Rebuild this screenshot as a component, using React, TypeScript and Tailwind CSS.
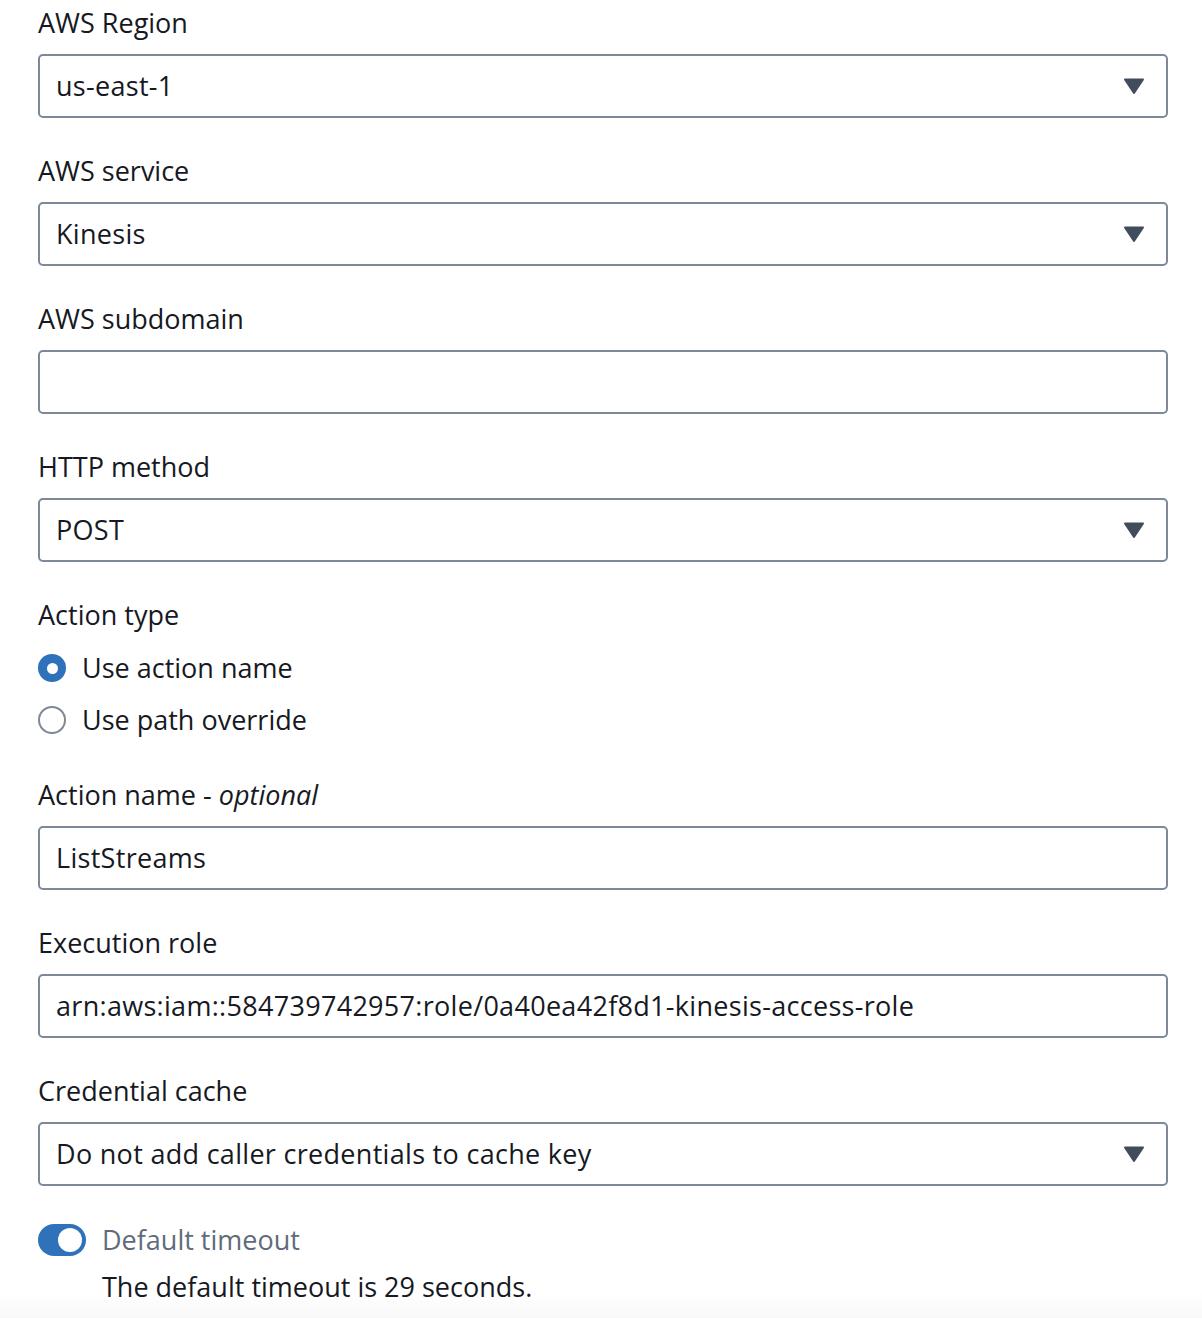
const font = { fontFamily: '"Open Sans", "Noto Sans", Arial, sans-serif' };

function Caret() {
  return (
    <svg width="20" height="16" viewBox="0 0 20 16" className="shrink-0">
      <path d="M1 1.5 L19 1.5 L10 15 Z" fill="#414d5c" stroke="#414d5c" strokeWidth="2" strokeLinejoin="round" />
    </svg>
  );
}

function Label({ children }: { children: React.ReactNode }) {
  return <div className="mb-2 h-10 leading-[34px] text-[27px] text-[#16191f]">{children}</div>;
}

function Box({ value, select }: { value?: string; select?: boolean }) {
  return (
    <div className="flex h-16 items-center justify-between rounded-[5px] border-2 border-[#7d8998] bg-white pl-4 pr-[22px] text-[27px] tracking-[0.3px] text-[#16191f]">
      <span className="truncate">{value}</span>
      {select && <Caret />}
    </div>
  );
}

function Field({ label, value, select }: { label: React.ReactNode; value?: string; select?: boolean }) {
  return (
    <div className="mb-9">
      <Label>{label}</Label>
      <Box value={value} select={select} />
    </div>
  );
}

function Radio({ checked, label }: { checked?: boolean; label: string }) {
  return (
    <div className="flex h-10 items-center gap-4 text-[27px] text-[#16191f]">
      {checked ? (
        <span className="flex h-7 w-7 items-center justify-center rounded-full bg-[#2f72ba]">
          <span className="h-[11px] w-[11px] rounded-full bg-white" />
        </span>
      ) : (
        <span className="h-7 w-7 rounded-full border-2 border-[#7d8998] bg-white" />
      )}
      <span>{label}</span>
    </div>
  );
}

export default function App() {
  return (
    <div className="min-h-[1318px] bg-gradient-to-b from-white from-[98%] to-[#f8f8f8] pl-[38px] pr-[34px] pt-[6px]" style={font}>
      <Field label="AWS Region" value="us-east-1" select />
      <Field label="AWS service" value="Kinesis" select />
      <Field label="AWS subdomain" />
      <Field label="HTTP method" value="POST" select />

      <div className="mb-[38px]">
        <Label>Action type</Label>
        <div className="mt-[10px] flex flex-col gap-3">
          <Radio checked label="Use action name" />
          <Radio label="Use path override" />
        </div>
      </div>

      <Field
        label={
          <>
            Action name - <i>optional</i>
          </>
        }
        value="ListStreams"
      />
      <Field label="Execution role" value="arn:aws:iam::584739742957:role/0a40ea42f8d1-kinesis-access-role" />
      <Field label="Credential cache" value="Do not add caller credentials to cache key" select />

      <div className="-mt-[2px] flex h-10 items-center gap-4">
        <span className="flex h-8 w-12 items-center justify-end rounded-full bg-[#2f72ba] pr-1">
          <span className="h-6 w-6 rounded-full bg-white" />
        </span>
        <span className="text-[27px] text-[#5f6b7a]">Default timeout</span>
      </div>
      <div className="mt-2 pl-16 text-[27px] leading-[38px] text-[#16191f]">The default timeout is 29 seconds.</div>
    </div>
  );
}
